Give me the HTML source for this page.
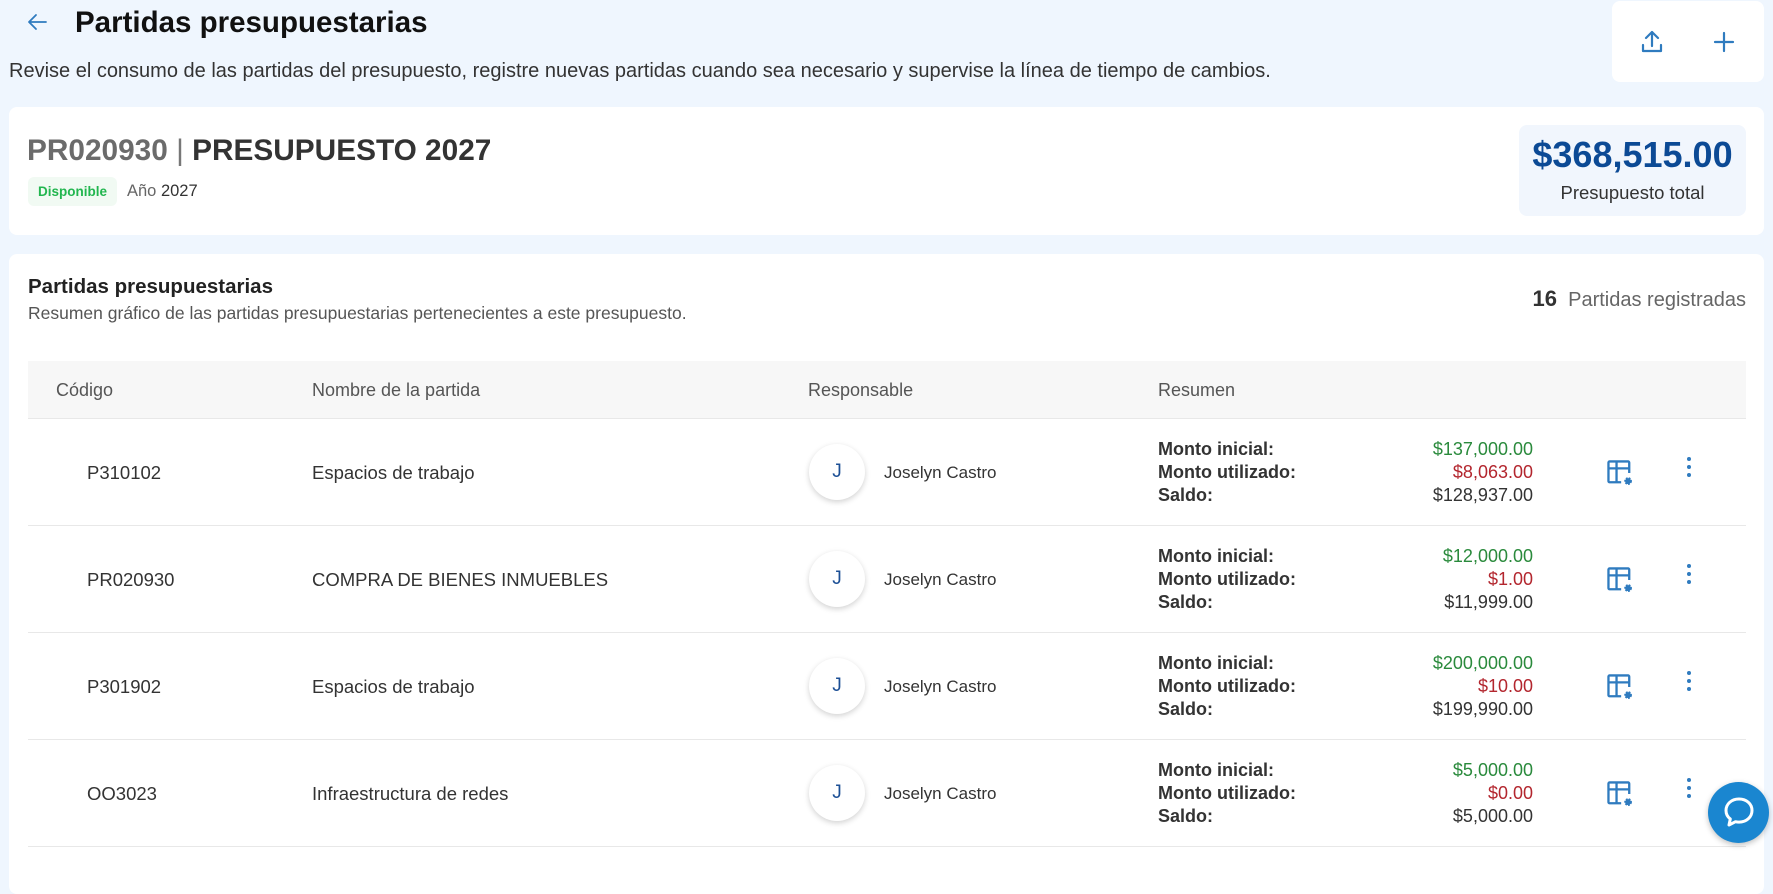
<!DOCTYPE html>
<html><head><meta charset="utf-8"><style>
*{box-sizing:border-box;margin:0;padding:0}
body{width:1773px;height:870px;overflow:hidden;background:#eff6fe;font-family:"Liberation Sans",sans-serif;color:#333;position:relative}
.abs{position:absolute}
.card{position:absolute;background:#fff;border-radius:8px}
.th{position:absolute;top:0;line-height:58px;font-size:18px;color:#555}
.row{position:absolute;left:28px;width:1718px;height:107px;border-bottom:1px solid #e8e8e8}
.row .code{position:absolute;left:59px;top:0;line-height:107px;font-size:18.5px;color:#333}
.row .name{position:absolute;left:284px;top:0;line-height:107px;font-size:18.5px;color:#333}
.av{position:absolute;left:781px;top:25px;width:56px;height:56px;border-radius:50%;background:#fff;box-shadow:0 2px 6px rgba(0,0,0,.18);text-align:center;line-height:56px;color:#1c4f95;font-size:19px}
.rn{position:absolute;left:856px;top:0;line-height:107px;font-size:17px;color:#333}
.sum{position:absolute;left:1130px;top:19px;width:375px;font-size:18px;line-height:23px}
.sum div{display:flex;justify-content:space-between}
.sum b{color:#333}
.g{color:#2a8a3c}.r{color:#b3262e}.k{color:#333}
.gi{position:absolute;left:1577px;top:39px}
.kb{position:absolute;left:1658px;top:37px}
</style></head><body>
<svg class="abs" style="left:26px;top:12px" width="22" height="20" viewBox="0 0 22 20"><path d="M20 10H3M10 3L3 10l7 7" fill="none" stroke="#2f7bbf" stroke-width="1.8" stroke-linecap="round" stroke-linejoin="round"/></svg>
<div class="abs" style="left:75px;top:6px;font-size:29.5px;font-weight:bold;color:#111">Partidas presupuestarias</div>
<div class="abs" style="left:9px;top:60px;font-size:20px;color:#333">Revise el consumo de las partidas del presupuesto, registre nuevas partidas cuando sea necesario y supervise la línea de tiempo de cambios.</div>
<div class="card" style="left:1612px;top:1px;width:152px;height:81px"></div>
<svg class="abs" style="left:1640px;top:29px" width="24" height="26" viewBox="0 0 24 26"><path d="M12 17V3M6 9l6-6 6 6M3 16v6h18v-6" fill="none" stroke="#2f7bbf" stroke-width="2.2" stroke-linecap="round" stroke-linejoin="round"/></svg>
<svg class="abs" style="left:1713px;top:31px" width="22" height="22" viewBox="0 0 22 22"><path d="M11 2v18M2 11h18" stroke="#2f7bbf" stroke-width="2.2" stroke-linecap="round"/></svg>
<div class="card" style="left:9px;top:107px;width:1755px;height:128px"></div>
<div class="abs" style="left:27px;top:134px;font-size:29.8px;font-weight:bold;color:#333"><span style="color:#6b6b6b">PR020930</span> <span style="color:#777;font-weight:normal">|</span> PRESUPUESTO 2027</div>
<div class="abs" style="left:28px;top:177px;width:89px;height:29px;background:#f1faf3;border-radius:6px;color:#22b64f;font-weight:bold;font-size:13.5px;text-align:center;line-height:29px">Disponible</div>
<div class="abs" style="left:127px;top:182px;font-size:16.5px;color:#666">Año <span style="color:#333">2027</span></div>
<div class="abs" style="left:1519px;top:125px;width:227px;height:91px;background:#f1f6fd;border-radius:8px;text-align:center">
<div style="font-size:36px;font-weight:bold;color:#0c4a95;margin-top:9px;line-height:42px">$368,515.00</div>
<div style="font-size:18.5px;color:#333;margin-top:6px">Presupuesto total</div></div>
<div class="card" style="left:9px;top:254px;width:1755px;height:640px"></div>
<div class="abs" style="left:28px;top:275px;font-size:20.5px;font-weight:bold;color:#222">Partidas presupuestarias</div>
<div class="abs" style="left:28px;top:303px;font-size:17.5px;color:#555">Resumen gráfico de las partidas presupuestarias pertenecientes a este presupuesto.</div>
<div class="abs" style="right:27px;top:286px;font-size:20px;color:#666"><b style="color:#333;font-size:22px">16</b>&nbsp; Partidas registradas</div>
<div class="abs" style="left:28px;top:361px;width:1718px;height:58px;background:#f7f7f7;border-bottom:1px solid #e8e8e8">
<div class="th" style="left:28px">Código</div><div class="th" style="left:284px">Nombre de la partida</div><div class="th" style="left:780px">Responsable</div><div class="th" style="left:1130px">Resumen</div></div>

<div class="row" style="top:419px"><div class="code">P310102</div><div class="name">Espacios de trabajo</div><div class="av">J</div><div class="rn">Joselyn Castro</div>
<div class="sum"><div><b>Monto inicial:</b><span class="g">$137,000.00</span></div><div><b>Monto utilizado:</b><span class="r">$8,063.00</span></div><div><b>Saldo:</b><span class="k">$128,937.00</span></div></div>
<svg class="gi" width="30" height="30" viewBox="0 0 26 26"><path d="M14 21H4a1 1 0 0 1-1-1V4a1 1 0 0 1 1-1h16a1 1 0 0 1 1 1v9M3 9h18M10 3v18" fill="none" stroke="#2f7bbf" stroke-width="2"/><circle cx="20" cy="20" r="2.6" fill="#2f7bbf" stroke="#2f7bbf" stroke-width="1.5" stroke-dasharray="1.5 1"/></svg>
<svg class="kb" width="6" height="22" viewBox="0 0 6 22"><circle cx="3" cy="3" r="2" fill="#2f7bbf"/><circle cx="3" cy="11" r="2" fill="#2f7bbf"/><circle cx="3" cy="19" r="2" fill="#2f7bbf"/></svg></div>

<div class="row" style="top:526px"><div class="code">PR020930</div><div class="name">COMPRA DE BIENES INMUEBLES</div><div class="av">J</div><div class="rn">Joselyn Castro</div>
<div class="sum"><div><b>Monto inicial:</b><span class="g">$12,000.00</span></div><div><b>Monto utilizado:</b><span class="r">$1.00</span></div><div><b>Saldo:</b><span class="k">$11,999.00</span></div></div>
<svg class="gi" width="30" height="30" viewBox="0 0 26 26"><path d="M14 21H4a1 1 0 0 1-1-1V4a1 1 0 0 1 1-1h16a1 1 0 0 1 1 1v9M3 9h18M10 3v18" fill="none" stroke="#2f7bbf" stroke-width="2"/><circle cx="20" cy="20" r="2.6" fill="#2f7bbf" stroke="#2f7bbf" stroke-width="1.5" stroke-dasharray="1.5 1"/></svg>
<svg class="kb" width="6" height="22" viewBox="0 0 6 22"><circle cx="3" cy="3" r="2" fill="#2f7bbf"/><circle cx="3" cy="11" r="2" fill="#2f7bbf"/><circle cx="3" cy="19" r="2" fill="#2f7bbf"/></svg></div>

<div class="row" style="top:633px"><div class="code">P301902</div><div class="name">Espacios de trabajo</div><div class="av">J</div><div class="rn">Joselyn Castro</div>
<div class="sum"><div><b>Monto inicial:</b><span class="g">$200,000.00</span></div><div><b>Monto utilizado:</b><span class="r">$10.00</span></div><div><b>Saldo:</b><span class="k">$199,990.00</span></div></div>
<svg class="gi" width="30" height="30" viewBox="0 0 26 26"><path d="M14 21H4a1 1 0 0 1-1-1V4a1 1 0 0 1 1-1h16a1 1 0 0 1 1 1v9M3 9h18M10 3v18" fill="none" stroke="#2f7bbf" stroke-width="2"/><circle cx="20" cy="20" r="2.6" fill="#2f7bbf" stroke="#2f7bbf" stroke-width="1.5" stroke-dasharray="1.5 1"/></svg>
<svg class="kb" width="6" height="22" viewBox="0 0 6 22"><circle cx="3" cy="3" r="2" fill="#2f7bbf"/><circle cx="3" cy="11" r="2" fill="#2f7bbf"/><circle cx="3" cy="19" r="2" fill="#2f7bbf"/></svg></div>

<div class="row" style="top:740px"><div class="code">OO3023</div><div class="name">Infraestructura de redes</div><div class="av">J</div><div class="rn">Joselyn Castro</div>
<div class="sum"><div><b>Monto inicial:</b><span class="g">$5,000.00</span></div><div><b>Monto utilizado:</b><span class="r">$0.00</span></div><div><b>Saldo:</b><span class="k">$5,000.00</span></div></div>
<svg class="gi" width="30" height="30" viewBox="0 0 26 26"><path d="M14 21H4a1 1 0 0 1-1-1V4a1 1 0 0 1 1-1h16a1 1 0 0 1 1 1v9M3 9h18M10 3v18" fill="none" stroke="#2f7bbf" stroke-width="2"/><circle cx="20" cy="20" r="2.6" fill="#2f7bbf" stroke="#2f7bbf" stroke-width="1.5" stroke-dasharray="1.5 1"/></svg>
<svg class="kb" width="6" height="22" viewBox="0 0 6 22"><circle cx="3" cy="3" r="2" fill="#2f7bbf"/><circle cx="3" cy="11" r="2" fill="#2f7bbf"/><circle cx="3" cy="19" r="2" fill="#2f7bbf"/></svg></div>

<div class="abs" style="left:1708px;top:782px;width:61px;height:61px;border-radius:50%;background:#1a86d0;box-shadow:0 2px 6px rgba(0,0,0,.25)"></div>
<svg class="abs" style="left:1721px;top:794px" width="36" height="36" viewBox="0 0 36 36"><path d="M18 5c-7.5 0-13 5-13 11.5 0 3.5 1.7 6.5 4.3 8.5L8 31l6.5-3.3c1.1.3 2.3.4 3.5.4 7.5 0 13-5 13-11.6S25.5 5 18 5z" fill="none" stroke="#fff" stroke-width="3" stroke-linejoin="round"/></svg>
</body></html>
